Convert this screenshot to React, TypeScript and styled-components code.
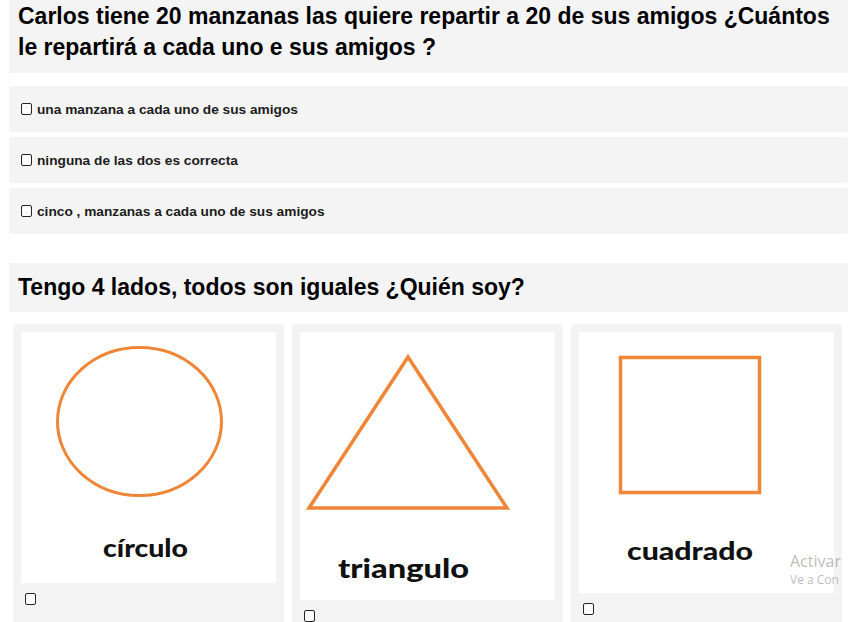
import styled, { createGlobalStyle } from "styled-components";

const GlobalStyle = createGlobalStyle`
  html, body {
    margin: 0;
    padding: 0;
    background: #ffffff;
    overflow: hidden;
  }
  body {
    font-family: "Liberation Sans", Arial, sans-serif;
    color: #000;
  }
`;

const ORANGE = "#ef8537";

const Page = styled.div`
  position: relative;
  width: 848px;
  height: 622px;
  padding-left: 9px;
  box-sizing: border-box;
  overflow: hidden;
`;

const QuestionTitle = styled.h2<{ $top?: number }>`
  margin: ${(p) => p.$top ?? 0}px 0 0 0;
  padding: 1px 9px 10px;
  background: #f4f4f4;
  font-size: 23px;
  line-height: 31px;
  font-weight: 700;
`;

const ShortTitle = styled(QuestionTitle)`
  height: 49px;
  padding: 0 9px;
  display: flex;
  align-items: center;
  box-sizing: border-box;
`;

const OptionList = styled.div`
  display: flex;
  flex-direction: column;
  gap: 5px;
  margin-top: 13px;
`;

const Option = styled.label`
  display: flex;
  align-items: center;
  height: 46px;
  padding-left: 8px;
  background: #f4f4f4;
  border-radius: 2px;
  font-size: 13.7px;
  font-weight: 700;
  color: #1c1c1c;
`;

const Check = styled.input.attrs({ type: "checkbox" })`
  appearance: none;
  width: 11px;
  height: 12px;
  margin: 0 5px 0 4px;
  border: 1.4px solid #262626;
  border-radius: 2px;
  background: #fff;
  box-sizing: border-box;
  flex-shrink: 0;
`;

const CardRow = styled.div`
  display: grid;
  grid-template-columns: repeat(3, 271px);
  gap: 8px;
  margin: 12px 0 0 4px;
  align-items: start;
`;

const Card = styled.label`
  display: flex;
  flex-direction: column;
  align-items: flex-start;
  padding: 8px 8px 40px;
  background: #f3f3f3;
  border-radius: 3px;
`;

const Figure = styled.svg`
  display: block;
  width: 255px;
  background: #ffffff;
`;

const CardCheck = styled(Check)`
  margin-top: 10px;
`;

const Watermark = styled.div`
  position: absolute;
  left: 790px;
  top: 551px;
  font-family: "Open Sans", "Noto Sans", sans-serif;
  color: rgba(120, 120, 120, 0.5);
  white-space: nowrap;
  line-height: 1.3;

  & .big {
    font-size: 16px;
  }
  & .small {
    font-size: 12px;
  }
`;

const labelStyle = {
  fontFamily: "Lato, 'Noto Sans', sans-serif",
  fontWeight: 900,
  fill: "#111",
};

const options = [
  "una manzana a cada uno de sus amigos",
  "ninguna de las dos es correcta",
  "cinco , manzanas a cada uno de sus amigos",
];

export default function App() {
  return (
    <>
      <GlobalStyle />
      <Page>
        <QuestionTitle>
          Carlos tiene 20 manzanas las quiere repartir a 20 de sus amigos ¿Cuántos le repartirá a cada
          uno e sus amigos ?
        </QuestionTitle>

        <OptionList>
          {options.map((o) => (
            <Option key={o}>
              <Check />
              {o}
            </Option>
          ))}
        </OptionList>

        <ShortTitle $top={29}>Tengo 4 lados, todos son iguales ¿Quién soy?</ShortTitle>

        <CardRow>
          <Card>
            <Figure height={251} viewBox="0 0 255 251">
              <ellipse cx="118.5" cy="89.5" rx="82" ry="74" fill="none" stroke={ORANGE} strokeWidth="3" />
              <text x="124.5" y="225" textAnchor="middle" fontSize="24" textLength="85" lengthAdjust="spacingAndGlyphs" style={labelStyle}>
                círculo
              </text>
            </Figure>
            <CardCheck />
          </Card>

          <Card>
            <Figure height={268} viewBox="0 0 255 268">
              <polygon points="108,25 9,176 207,176" fill="none" stroke={ORANGE} strokeWidth="3.5" strokeLinejoin="miter" />
              <text x="103.5" y="246" textAnchor="middle" fontSize="26" textLength="131" lengthAdjust="spacingAndGlyphs" style={labelStyle}>
                triangulo
              </text>
            </Figure>
            <CardCheck />
          </Card>

          <Card>
            <Figure height={261} viewBox="0 0 255 261">
              <rect x="41.5" y="25.5" width="139" height="135" fill="none" stroke={ORANGE} strokeWidth="3.5" />
              <text x="111" y="228" textAnchor="middle" fontSize="24" textLength="126" lengthAdjust="spacingAndGlyphs" style={labelStyle}>
                cuadrado
              </text>
            </Figure>
            <CardCheck />
          </Card>
        </CardRow>

        <Watermark>
          <div className="big">Activar</div>
          <div className="small">Ve a Con</div>
        </Watermark>
      </Page>
    </>
  );
}
